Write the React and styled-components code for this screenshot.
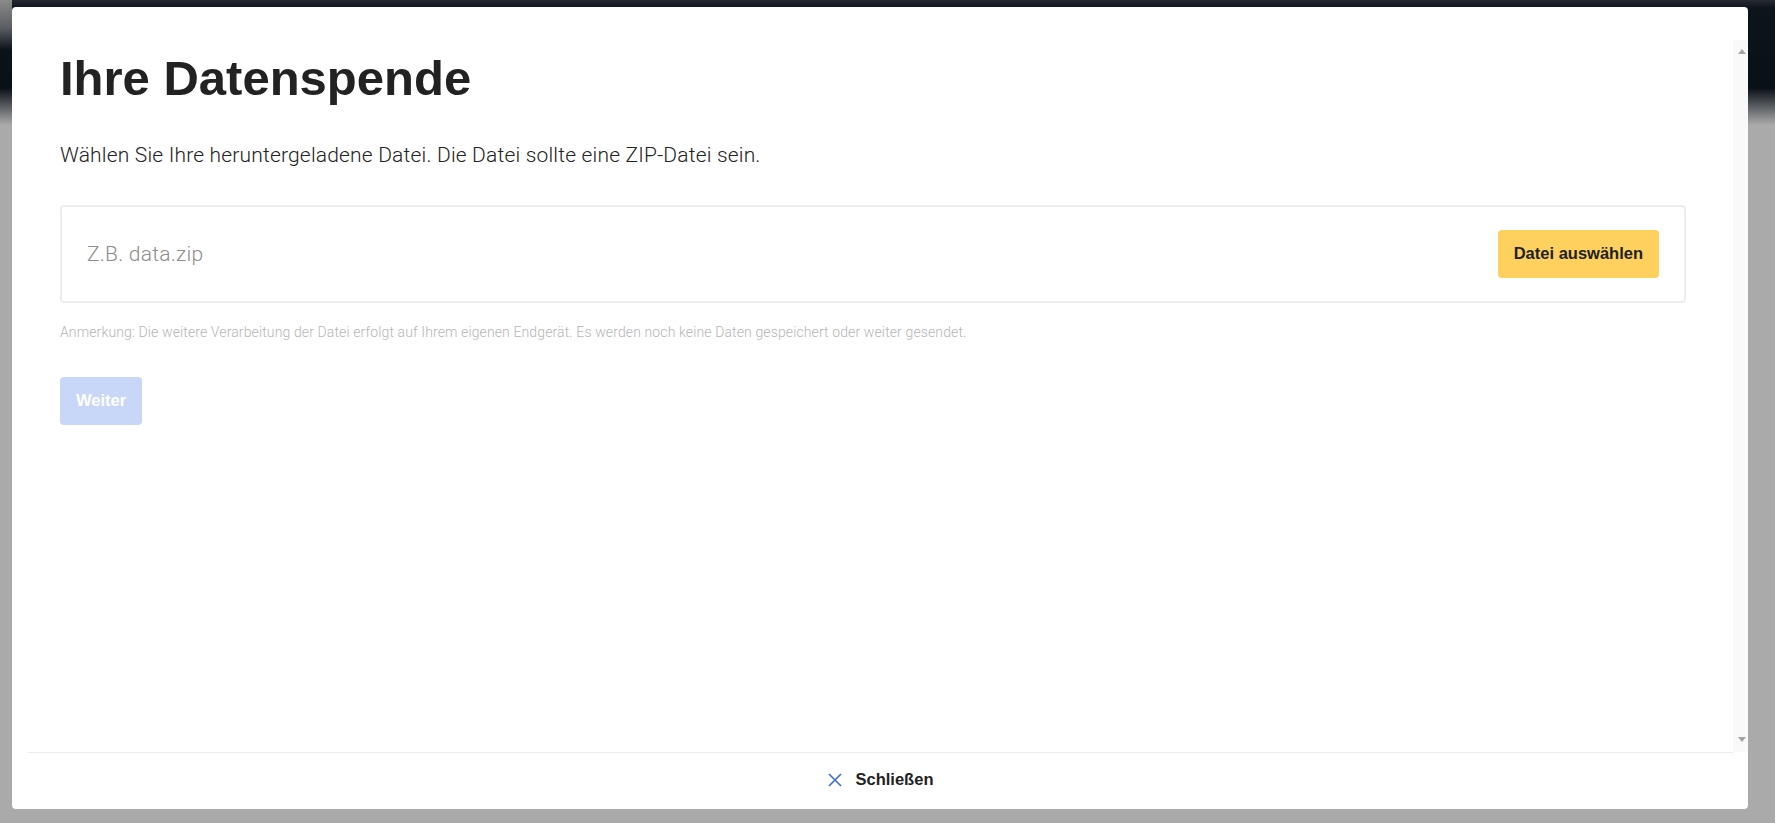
import React from "react";
import styled, { createGlobalStyle } from "styled-components";

const Global = createGlobalStyle`
  html, body { margin: 0; padding: 0; height: 100%; }
  body {
    font-family: Roboto, "Liberation Sans", Arial, sans-serif;
    background: #aaaaaa;
  }
  #root { height: 100%; }
  * { box-sizing: border-box; }
`;

const Backdrop = styled.div`
  height: 100vh;
  display: flex;
  padding: 7px 27px 14px 12px;
  background:
    linear-gradient(180deg, #8a8a8a 0px, #5a5d62 28px, rgba(10, 16, 24, 0) 50px) left top / 12px 100% no-repeat,
    linear-gradient(180deg, #262b33 0px, #0e141c 8px, #0a1018 88px, #aaaaaa 125px, #aaaaaa 100%);
`;

const Modal = styled.div`
  flex: 1;
  display: flex;
  flex-direction: column;
  background: #ffffff;
  border-radius: 4px;
  overflow: hidden;
`;

const ModalHeader = styled.div`
  height: 33px;
  flex: none;
`;

const Main = styled.div`
  flex: 1;
  min-height: 0;
  display: flex;
`;

const Body = styled.div`
  flex: 1;
  overflow-y: auto;
  padding: 9px 47px 0 48px;
`;

const ScrollTrack = styled.div`
  flex: none;
  width: 15px;
  background: #f9f9f9;
  display: flex;
  flex-direction: column;
  justify-content: space-between;
  align-items: center;
  padding: 9px 0 10px 3px;
`;

const Arrow = styled.span`
  width: 0;
  height: 0;
  border-left: 4px solid transparent;
  border-right: 4px solid transparent;
  ${(p) =>
    p.$up
      ? "border-bottom: 5px solid #a3a3a3;"
      : "border-top: 5px solid #a3a3a3;"}
`;

const Title = styled.h1`
  margin: 0;
  font-family: "Liberation Sans", Arial, sans-serif;
  font-weight: 700;
  font-size: 49px;
  line-height: 1.2;
  color: #222222;
`;

const Lead = styled.p`
  margin: 32px 0 35px;
  font-family: Roboto, sans-serif;
  font-weight: 300;
  font-size: 21px;
  letter-spacing: 0.18px;
  line-height: 30px;
  color: #222222;
`;

const FileField = styled.div`
  display: flex;
  align-items: center;
  justify-content: space-between;
  height: 98px;
  padding: 0 25px;
  border: 2px solid #ededed;
  border-radius: 4px;
`;

const Placeholder = styled.span`
  font-family: Roboto, sans-serif;
  font-weight: 300;
  font-size: 21px;
  letter-spacing: 0.25px;
  color: #8d8d8d;
`;

const Button = styled.button`
  border: none;
  border-radius: 4px;
  height: 48px;
  padding: 0 16px;
  font-family: "Liberation Sans", Arial, sans-serif;
  font-weight: 700;
  font-size: 16.5px;
  background: ${(p) => p.$bg};
  color: ${(p) => p.$fg};
  cursor: pointer;
`;

const Note = styled.p`
  margin: 19px 0 0;
  font-family: Roboto, sans-serif;
  font-weight: 300;
  font-size: 14px;
  letter-spacing: 0.12px;
  line-height: 20px;
  color: #b5b5b5;
`;

const Actions = styled.div`
  margin-top: 35px;
  display: flex;
`;

const Footer = styled.div`
  flex: none;
  height: 57px;
  margin: 0 15px 0 16px;
  padding-bottom: 3px;
  border-top: 1px solid #ececec;
  display: flex;
  align-items: center;
  justify-content: center;
`;

const CloseButton = styled.button`
  display: flex;
  align-items: center;
  gap: 14px;
  border: none;
  background: none;
  padding: 0;
  font-family: "Liberation Sans", Arial, sans-serif;
  font-weight: 700;
  font-size: 16.5px;
  color: #222222;
  cursor: pointer;
`;

const CloseIcon = () => (
  <svg width="14" height="14" viewBox="0 0 14 14" fill="none">
    <path d="M1 1 L13 13 M13 1 L1 13" stroke="#3f6fd6" strokeWidth="1.6" />
  </svg>
);

export default function App() {
  return (
    <>
      <Global />
      <Backdrop>
        <Modal>
          <ModalHeader />
          <Main>
            <Body>
              <Title>Ihre Datenspende</Title>
              <Lead>Wählen Sie Ihre heruntergeladene Datei. Die Datei sollte eine ZIP-Datei sein.</Lead>
              <FileField>
                <Placeholder>Z.B. data.zip</Placeholder>
                <Button $bg="#fed15f" $fg="#222222">Datei auswählen</Button>
              </FileField>
              <Note>
                Anmerkung: Die weitere Verarbeitung der Datei erfolgt auf Ihrem eigenen Endgerät. Es werden noch keine Daten gespeichert oder weiter gesendet.
              </Note>
              <Actions>
                <Button $bg="#c8d6f8" $fg="#ffffff">Weiter</Button>
              </Actions>
            </Body>
            <ScrollTrack>
              <Arrow $up />
              <Arrow />
            </ScrollTrack>
          </Main>
          <Footer>
            <CloseButton>
              <CloseIcon />
              Schließen
            </CloseButton>
          </Footer>
        </Modal>
      </Backdrop>
    </>
  );
}
